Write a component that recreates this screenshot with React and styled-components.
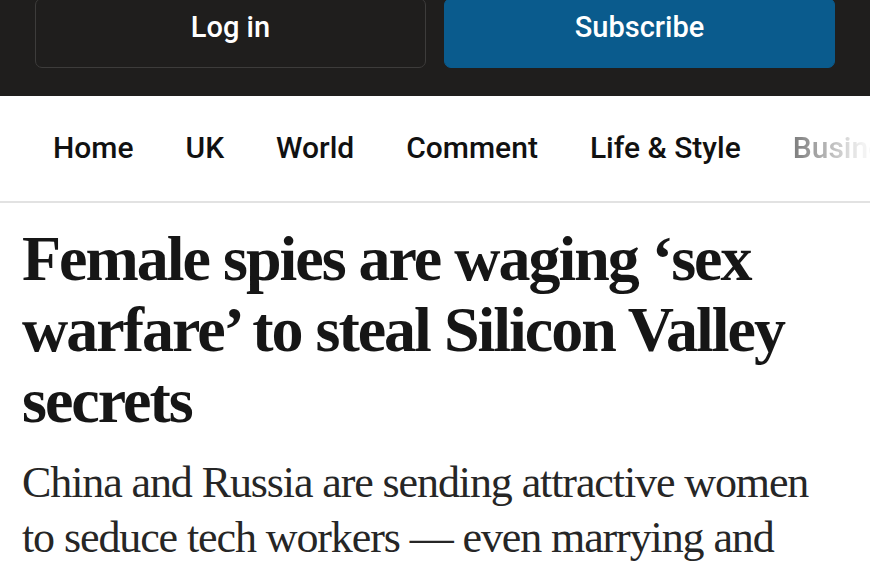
import React from "react";
import styled, { createGlobalStyle } from "styled-components";

const Global = createGlobalStyle`
  html, body { margin: 0; padding: 0; background: #ffffff; }
  body { width: 870px; height: 570px; overflow: hidden; }
`;

const Page = styled.div`
  width: 870px;
  height: 570px;
  overflow: hidden;
  background: #ffffff;
  display: flex;
  flex-direction: column;
`;

const TopBar = styled.header`
  background: #1f1e1d;
  height: 96px;
  flex: none;
  display: grid;
  grid-template-columns: 391px 391px;
  column-gap: 18px;
  padding: 0 35px;
  align-items: start;
`;

const Button = styled.button`
  height: 70px;
  margin-top: -2px;
  border-radius: 7px;
  border: 1.5px solid ${(p) => (p.$primary ? "#0a5b8d" : "#3d3c3b")};
  background: ${(p) => (p.$primary ? "#0a5b8d" : "#1f1e1d")};
  color: #ffffff;
  font-family: Roboto, "Liberation Sans", sans-serif;
  font-weight: 500;
  font-size: 29px;
  padding: 0 0 12px;
  display: flex;
  align-items: center;
  justify-content: center;
`;

const Nav = styled.nav`
  height: 103px;
  flex: none;
  border-bottom: 2px solid #e2e2e2;
  display: flex;
  align-items: center;
  gap: 52px;
  padding: 0 0 2px 53px;
  overflow: hidden;
  white-space: nowrap;
`;

const NavItem = styled.span`
  font-family: Roboto, "Liberation Sans", sans-serif;
  font-weight: 500;
  font-size: 30px;
  color: #111111;
  ${(p) => p.$faded && `
    -webkit-mask-image: linear-gradient(to right, rgba(0,0,0,0.55), rgba(0,0,0,0.05) 70px);
    mask-image: linear-gradient(to right, rgba(0,0,0,0.55), rgba(0,0,0,0.05) 70px);
  `}
`;

const Article = styled.article`
  padding: 20px 22px 0;
`;

const Headline = styled.h1`
  margin: 0;
  font-family: "Liberation Serif", "Times New Roman", serif;
  font-weight: 700;
  font-size: 64px;
  line-height: 71px;
  letter-spacing: -2px;
  color: #161616;
`;

const Standfirst = styled.p`
  margin: 19px 0 0;
  max-width: 800px;
  font-family: "Liberation Serif", "Times New Roman", serif;
  font-weight: 400;
  font-size: 44px;
  line-height: 55px;
  letter-spacing: -1.1px;
  color: #262626;
`;

export default function App() {
  return (
    <Page>
      <Global />
      <TopBar>
        <Button>Log in</Button>
        <Button $primary>Subscribe</Button>
      </TopBar>
      <Nav>
        <NavItem>Home</NavItem>
        <NavItem>UK</NavItem>
        <NavItem>World</NavItem>
        <NavItem>Comment</NavItem>
        <NavItem>Life &amp; Style</NavItem>
        <NavItem $faded>Business</NavItem>
      </Nav>
      <Article>
        <Headline>Female spies are waging ‘sex warfare’ to steal Silicon Valley secrets</Headline>
        <Standfirst>China and Russia are sending attractive women to seduce tech workers — even marrying and</Standfirst>
      </Article>
    </Page>
  );
}
